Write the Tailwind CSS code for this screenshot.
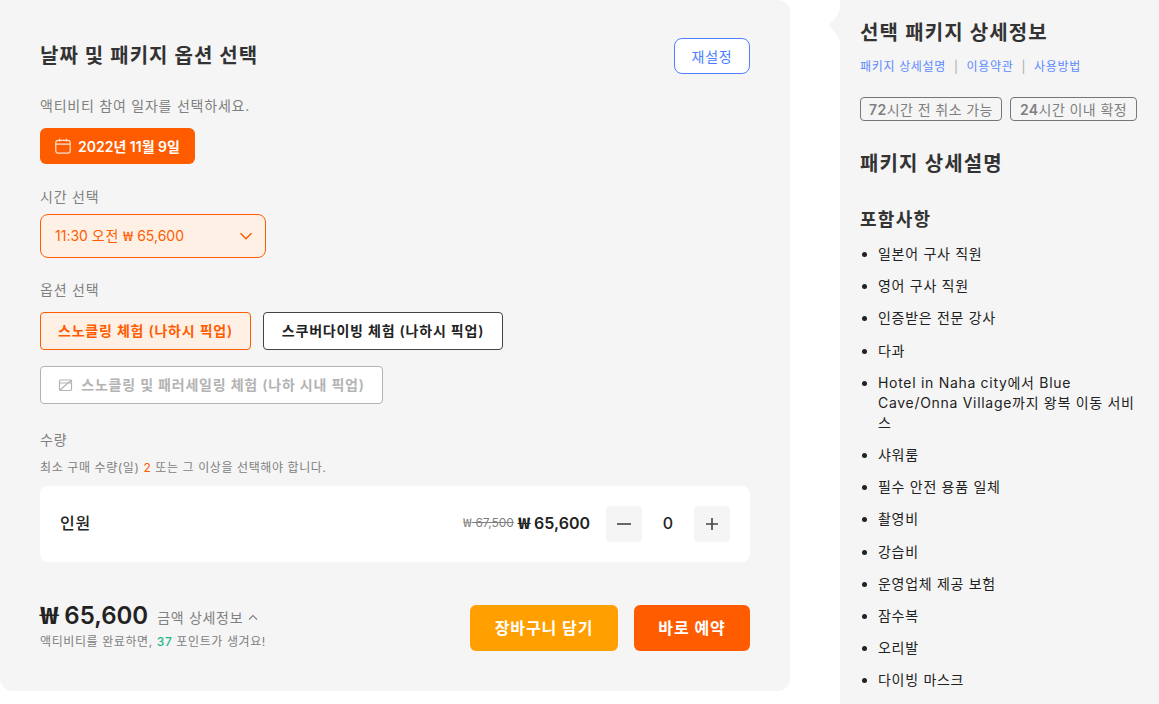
<!doctype html>
<html lang="ko"><head><meta charset="utf-8"><script src="https://cdn.jsdelivr.net/npm/@tailwindcss/browser@4"></script></head>
<body class="bg-white overflow-hidden">
<div class="relative flex w-[1159px] h-[704px] overflow-hidden font-['Inter','Noto_Sans_CJK_KR',sans-serif] text-[#222]">
  <main class="w-[790px] h-[691px] shrink-0 bg-[#f5f5f5] rounded-b-xl rounded-tr-xl px-10 pt-[38px]">
    <div class="flex justify-between items-start h-[36px]">
      <h2 class="text-[20px] leading-[36px] tracking-[0.05em] font-semibold text-[#333]">날짜 및 패키지 옵션 선택</h2>
      <button class="w-[76px] h-[36px] bg-white border border-[#4a80ff] rounded-lg text-[14px] tracking-[0.055em] text-[#4a80ff]">재설정</button>
    </div>
    <p class="mt-[22px] text-[14px] leading-[20px] tracking-[0.055em] text-[#808080]">액티비티 참여 일자를 선택하세요.</p>
    <button class="mt-[12px] flex items-center gap-[7px] h-[36px] w-[155px] px-[15px] bg-[#ff5c00] rounded-md text-white text-[14px] font-semibold whitespace-nowrap">
      <svg class="w-4 h-4 shrink-0" viewBox="0 0 16 16" fill="none" stroke="#ffe3d2" stroke-width="1.2"><rect x="0.8" y="2.4" width="14.4" height="12.8" rx="2.4"/><path d="M.8 6.2h14.4M4.6.8v2.6M11.4.8v2.6"/></svg>
      <span>2022년 11월 9일</span>
    </button>
    <p class="mt-[23px] text-[14px] leading-[20px] tracking-[0.055em] text-[#808080]">시간 선택</p>
    <button class="mt-[7px] flex items-center justify-between w-[226px] h-[44px] pl-[14px] pr-[12px] bg-[#fff0e6] border border-[#ff5c00] rounded-lg text-[14px] text-[#ff5c00]">
      <span class="mb-[2px]">11:30 <span class="tracking-[0.055em]">오전</span> <span class="inline-block origin-left scale-x-[1.3] mr-[0.17em] font-['Noto_Sans_CJK_KR'] leading-none">₩</span> 65,600</span>
      <svg class="w-[14px] h-[10px]" viewBox="0 0 14 10" fill="none" stroke="#ff5c00" stroke-width="1.5"><path d="M1.5 2.2 7 7.8l5.5-5.6"/></svg>
    </button>
    <p class="mt-[22px] text-[14px] leading-[20px] tracking-[0.055em] text-[#808080]">옵션 선택</p>
    <div class="mt-[12px] flex gap-3">
      <button class="w-[211px] h-[38px] pb-[2px] bg-[#fff0e6] border border-[#ff5c00] rounded text-[14px] tracking-[0.055em] font-semibold text-[#ff5c00] whitespace-nowrap">스노클링 체험 (나하시 픽업)</button>
      <button class="w-[240px] h-[38px] pb-[2px] bg-white border border-[#444] rounded text-[14px] tracking-[0.055em] font-semibold text-[#222] whitespace-nowrap">스쿠버다이빙 체험 (나하시 픽업)</button>
    </div>
    <button class="mt-[16px] flex items-center justify-center gap-2 w-[343px] h-[38px] bg-white border border-[#b3b3b3] rounded text-[14px] tracking-[0.055em] font-semibold text-[#b3b3b3] whitespace-nowrap">
      <svg class="w-[15px] h-[14px] shrink-0" viewBox="0 0 15 14" fill="none" stroke="#b3b3b3" stroke-width="1.2"><rect x="1.5" y="2" width="12" height="10.5" rx="1.2"/><path d="M1.5 5h12M1.5 12.5 13.5 2"/></svg>
      <span class="mb-[2px]">스노클링 및 패러세일링 체험 (나하 시내 픽업)</span>
    </button>
    <p class="mt-[26px] text-[14px] leading-[20px] tracking-[0.055em] text-[#808080]">수량</p>
    <p class="mt-[10px] text-[12px] leading-[16px] tracking-[0.05em] text-[#808080]">최소 구매 수량(일) <span class="text-[#ff5c00]">2</span> 또는 그 이상을 선택해야 합니다.</p>
    <div class="mt-[10px] flex items-center justify-between h-[76px] px-5 bg-white rounded-lg">
      <span class="mb-[2px] text-[16px] tracking-[0.055em] font-medium">인원</span>
      <div class="flex items-center">
        <span class="mb-[2px] text-[12px] text-[#808080] line-through"><span class="inline-block origin-left scale-x-[1.3] mr-[0.17em] font-['Noto_Sans_CJK_KR'] leading-none">₩</span> 67,500</span>
        <span class="ml-1 mb-[2px] text-[16px] font-semibold"><span class="inline-block origin-left scale-x-[1.3] mr-[0.17em] font-['Noto_Sans_CJK_KR'] leading-none">₩</span> 65,600</span>
        <button class="ml-4 w-9 h-9 bg-[#f5f5f5] rounded flex items-center justify-center"><svg class="w-[14px] h-[14px]" viewBox="0 0 14 14" stroke="#444" stroke-width="1.6"><path d="M0 7h14"/></svg></button>
        <span class="mb-[2px] w-[52px] text-center text-[16px] font-medium">0</span>
        <button class="w-9 h-9 bg-[#f5f5f5] rounded flex items-center justify-center"><svg class="w-[14px] h-[14px]" viewBox="0 0 14 14" stroke="#444" stroke-width="1.6"><path d="M1 7h12M7 1v12"/></svg></button>
      </div>
    </div>
    <div class="mt-[43px] flex justify-between items-start">
      <div>
        <div class="flex items-center h-[22px]">
          <span class="text-[24px] font-semibold"><span class="inline-block origin-left scale-x-[1.3] mr-[0.17em] font-['Noto_Sans_CJK_KR'] leading-none">₩</span> 65,600</span>
          <span class="ml-[9px] mt-[3px] text-[14px] tracking-[0.05em] text-[#808080]">금액 상세정보</span>
          <svg class="ml-[5px] mt-[2px] w-[10px] h-[7px]" viewBox="0 0 10 7" fill="none" stroke="#808080" stroke-width="1.1"><path d="M1 5.5 5 1.5l4 4"/></svg>
        </div>
        <p class="mt-[7px] text-[12px] leading-[16px] tracking-[0.05em] text-[#808080]">액티비티를 완료하면, <span class="font-medium text-[#1fb78a]">37</span> 포인트가 생겨요!</p>
      </div>
      <div class="flex gap-4">
        <button class="w-[148px] h-[46px] bg-[#ff9f00] rounded-md text-white text-[16px] tracking-[0.055em] font-semibold">장바구니 담기</button>
        <button class="w-[116px] h-[46px] bg-[#ff5c00] rounded-md text-white text-[16px] tracking-[0.055em] font-semibold">바로 예약</button>
      </div>
    </div>
  </main>
  <svg class="absolute left-[828px] top-0 w-[13px] h-[50px]" viewBox="0 0 13 50" fill="#f5f5f5"><path d="M13 0v50c0-8-2-12-6-17-2-3-5-6-6-8 1-2 5-5 7-8 3-4 5-9 5-17z"/></svg>
  <aside class="ml-[50px] w-[319px] h-[704px] shrink-0 bg-[#f5f5f5] pl-5 pt-[20px]">
    <h3 class="text-[20px] leading-[26px] tracking-[0.055em] font-semibold text-[#333]">선택 패키지 상세정보</h3>
    <div class="mt-[12px] flex items-center text-[12px] leading-[18px] tracking-[0.055em] text-[#5c8aff]">
      <span>패키지 상세설명</span><span class="mx-[8px] text-[#aaa]">|</span><span>이용약관</span><span class="mx-[8px] text-[#aaa]">|</span><span>사용방법</span>
    </div>
    <div class="mt-[21px] flex gap-2">
      <span class="w-[142px] h-[24px] flex items-center justify-center border border-[#777] rounded text-[14px] tracking-[0.03em] text-[#808080] whitespace-nowrap"><b class="font-semibold">72</b>시간 전 취소 가능</span>
      <span class="w-[127px] h-[24px] flex items-center justify-center border border-[#777] rounded text-[14px] tracking-[0.03em] text-[#808080] whitespace-nowrap"><b class="font-semibold">24</b>시간 이내 확정</span>
    </div>
    <h4 class="mt-[30px] text-[20px] leading-[26px] tracking-[0.055em] font-semibold text-[#333]">패키지 상세설명</h4>
    <h4 class="mt-[30px] text-[18px] leading-[26px] tracking-[0.07em] font-semibold text-[#333]">포함사항</h4>
    <ul class="mt-[11px] w-[290px] list-disc pl-[18px] text-[14px] leading-[20px] tracking-[0.05em] text-[#222] flex flex-col gap-[12.2px]">
      <li>일본어 구사 직원</li>
      <li>영어 구사 직원</li>
      <li>인증받은 전문 강사</li>
      <li>다과</li>
      <li>Hotel in Naha city에서 Blue<br>Cave/Onna Village까지 왕복 이동 서비<br>스</li>
      <li>샤워룸</li>
      <li>필수 안전 용품 일체</li>
      <li>촬영비</li>
      <li>강습비</li>
      <li>운영업체 제공 보험</li>
      <li>잠수복</li>
      <li>오리발</li>
      <li>다이빙 마스크</li>
    </ul>
  </aside>
</div>
</body></html>
